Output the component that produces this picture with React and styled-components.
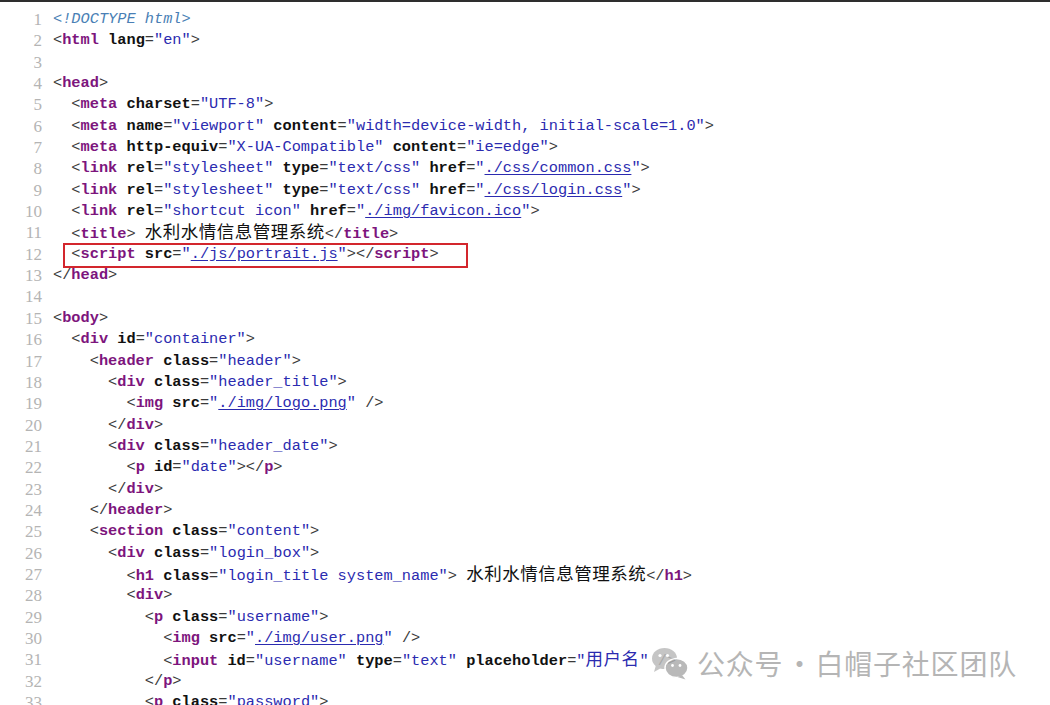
import React from 'react';
import styled, { createGlobalStyle } from 'styled-components';

const Global = createGlobalStyle`
  html, body { margin: 0; padding: 0; background: #fff; }
  body { width: 1050px; height: 705px; overflow: hidden; }
`;

const Page = styled.div`
  position: relative;
  height: 705px;
  box-sizing: border-box;
  border-top: 2px solid #2e2e2e;
  padding-top: 7px;
  background: #fff;
  overflow: hidden;
  font-family: "Liberation Mono", "Noto Sans CJK SC", monospace;
  font-size: 15.3px;
  letter-spacing: 0;
  color: #1a1a1a;
`;

const Row = styled.div`
  display: grid;
  grid-template-columns: 42px 1fr;
  column-gap: 11px;
  height: 21.35px;
  line-height: 21.35px;
`;

const LineNo = styled.span`
  text-align: right;
  color: #b4b4b4;
  font-family: "Liberation Serif", serif;
  font-size: 17px;
`;

const Code = styled.span`
  white-space: pre;
`;

const Highlight = styled.span`
  position: relative;
  display: inline-block;
  &::after {
    content: '';
    position: absolute;
    left: -8px;
    right: -29px;
    top: -1px;
    bottom: -3px;
    border: 2px solid #d3262d;
  }
`;

const Tag = styled.span`
  color: #7d157d;
  font-weight: bold;
`;

const Attr = styled.span`
  color: #111;
  font-weight: bold;
`;

const Val = styled.span`
  color: #2b2bb0;
`;

const Link = styled.span`
  color: #2b2bb0;
  text-decoration: underline;
  text-underline-offset: 2px;
`;

const Punct = styled.span`
  color: #3a3a3a;
`;

const Doctype = styled.span`
  color: #4a7fb5;
  font-style: italic;
`;

const Cjk = styled.span`
  font-family: "Noto Sans CJK SC", sans-serif;
  font-size: 17.5px;
  line-height: 1;
  letter-spacing: 0.5px;
  color: ${(p) => (p.$blue ? '#2b2bb0' : '#111')};
`;

const Watermark = styled.div`
  position: absolute;
  left: 651px;
  top: 644px;
  display: flex;
  align-items: center;
  gap: 8px;
`;

const IconWrap = styled.span`
  display: flex;
  opacity: 0.85;
`;

const WmText = styled.span`
  font-family: "Noto Sans CJK SC", sans-serif;
  font-size: 28px;
  line-height: 34px;
  letter-spacing: 0.8px;
  color: #b5b5b5;
  white-space: pre;
`;

const WmDot = styled.span`
  display: inline-block;
  width: 32px;
  text-align: center;
  letter-spacing: 0;
`;

// token helpers
const p = (t) => ['p', t];
const open = (name, attrs = [], selfClose = false) => {
  const out = [p('<'), ['t', name]];
  attrs.forEach(([n, v, kind]) => {
    out.push(p(' '), ['a', n], p('='));
    if (kind === 'link') out.push(['v', '"'], ['l', v], ['v', '"']);
    else if (kind === 'cjk') out.push(['v', '"'], ['vc', v], ['v', '"']);
    else out.push(['v', `"${v}"`]);
  });
  if (selfClose) out.push(p(' />'));
  else out.push(p('>'));
  return out;
};
const close = (name) => [p('</'), ['t', name], p('>')];
const ind = (n) => [['s', ' '.repeat(n)]];

const lines = [
  [['d', '<!DOCTYPE html>']],
  open('html', [['lang', 'en']]),
  [],
  open('head'),
  [...ind(2), ...open('meta', [['charset', 'UTF-8']])],
  [...ind(2), ...open('meta', [['name', 'viewport'], ['content', 'width=device-width, initial-scale=1.0']])],
  [...ind(2), ...open('meta', [['http-equiv', 'X-UA-Compatible'], ['content', 'ie=edge']])],
  [...ind(2), ...open('link', [['rel', 'stylesheet'], ['type', 'text/css'], ['href', './css/common.css', 'link']])],
  [...ind(2), ...open('link', [['rel', 'stylesheet'], ['type', 'text/css'], ['href', './css/login.css', 'link']])],
  [...ind(2), ...open('link', [['rel', 'shortcut icon'], ['href', './img/favicon.ico', 'link']])],
  [...ind(2), ...open('title'), p(' '), ['c', '水利水情信息管理系统'], ...close('title')],
  { indent: 2, box: [...open('script', [['src', './js/portrait.js', 'link']]), ...close('script')] },
  close('head'),
  [],
  open('body'),
  [...ind(2), ...open('div', [['id', 'container']])],
  [...ind(4), ...open('header', [['class', 'header']])],
  [...ind(6), ...open('div', [['class', 'header_title']])],
  [...ind(8), ...open('img', [['src', './img/logo.png', 'link']], true)],
  [...ind(6), ...close('div')],
  [...ind(6), ...open('div', [['class', 'header_date']])],
  [...ind(8), ...open('p', [['id', 'date']]), ...close('p')],
  [...ind(6), ...close('div')],
  [...ind(4), ...close('header')],
  [...ind(4), ...open('section', [['class', 'content']])],
  [...ind(6), ...open('div', [['class', 'login_box']])],
  [...ind(8), ...open('h1', [['class', 'login_title system_name']]), p(' '), ['c', '水利水情信息管理系统'], ...close('h1')],
  [...ind(8), ...open('div')],
  [...ind(10), ...open('p', [['class', 'username']])],
  [...ind(12), ...open('img', [['src', './img/user.png', 'link']], true)],
  [...ind(12), ...open('input', [['id', 'username'], ['type', 'text'], ['placeholder', '用户名', 'cjk']], true)],
  [...ind(10), ...close('p')],
  [...ind(10), ...open('p', [['class', 'password']])],
];

const renderTokens = (tokens) =>
  tokens.map(([type, text], i) => {
    switch (type) {
      case 't': return <Tag key={i}>{text}</Tag>;
      case 'a': return <Attr key={i}>{text}</Attr>;
      case 'v': return <Val key={i}>{text}</Val>;
      case 'l': return <Link key={i}>{text}</Link>;
      case 'd': return <Doctype key={i}>{text}</Doctype>;
      case 'c': return <Cjk key={i}>{text}</Cjk>;
      case 'vc': return <Cjk key={i} $blue>{text}</Cjk>;
      case 's': return <span key={i}>{text}</span>;
      default: return <Punct key={i}>{text}</Punct>;
    }
  });

const WeChatIcon = () => (
  <svg width="38" height="34" viewBox="0 0 38 34">
    <ellipse cx="13.5" cy="12.5" rx="12.5" ry="10.5" fill="#bcbcbc" />
    <path d="M5 19 L3 26 L11 21.5 Z" fill="#bcbcbc" />
    <circle cx="9" cy="9.5" r="1.6" fill="#fff" />
    <circle cx="16.5" cy="9.5" r="1.6" fill="#fff" />
    <ellipse cx="25.5" cy="22" rx="11.5" ry="9.5" fill="#adadad" stroke="#fff" strokeWidth="1.5" />
    <path d="M31 29 L34.5 33.5 L26.5 31 Z" fill="#adadad" />
    <circle cx="21.5" cy="19.5" r="1.4" fill="#fff" />
    <circle cx="29" cy="19.5" r="1.4" fill="#fff" />
  </svg>
);

export default function App() {
  return (
    <>
      <Global />
      <Page>
        {lines.map((line, i) => (
          <Row key={i}>
            <LineNo>{i + 1}</LineNo>
            <Code>
              {Array.isArray(line) ? (
                renderTokens(line)
              ) : (
                <>
                  {' '.repeat(line.indent)}
                  <Highlight>{renderTokens(line.box)}</Highlight>
                </>
              )}
            </Code>
          </Row>
        ))}
        <Watermark>
          <IconWrap>
            <WeChatIcon />
          </IconWrap>
          <WmText>
            公众号<WmDot>·</WmDot>白帽子社区团队
          </WmText>
        </Watermark>
      </Page>
    </>
  );
}
